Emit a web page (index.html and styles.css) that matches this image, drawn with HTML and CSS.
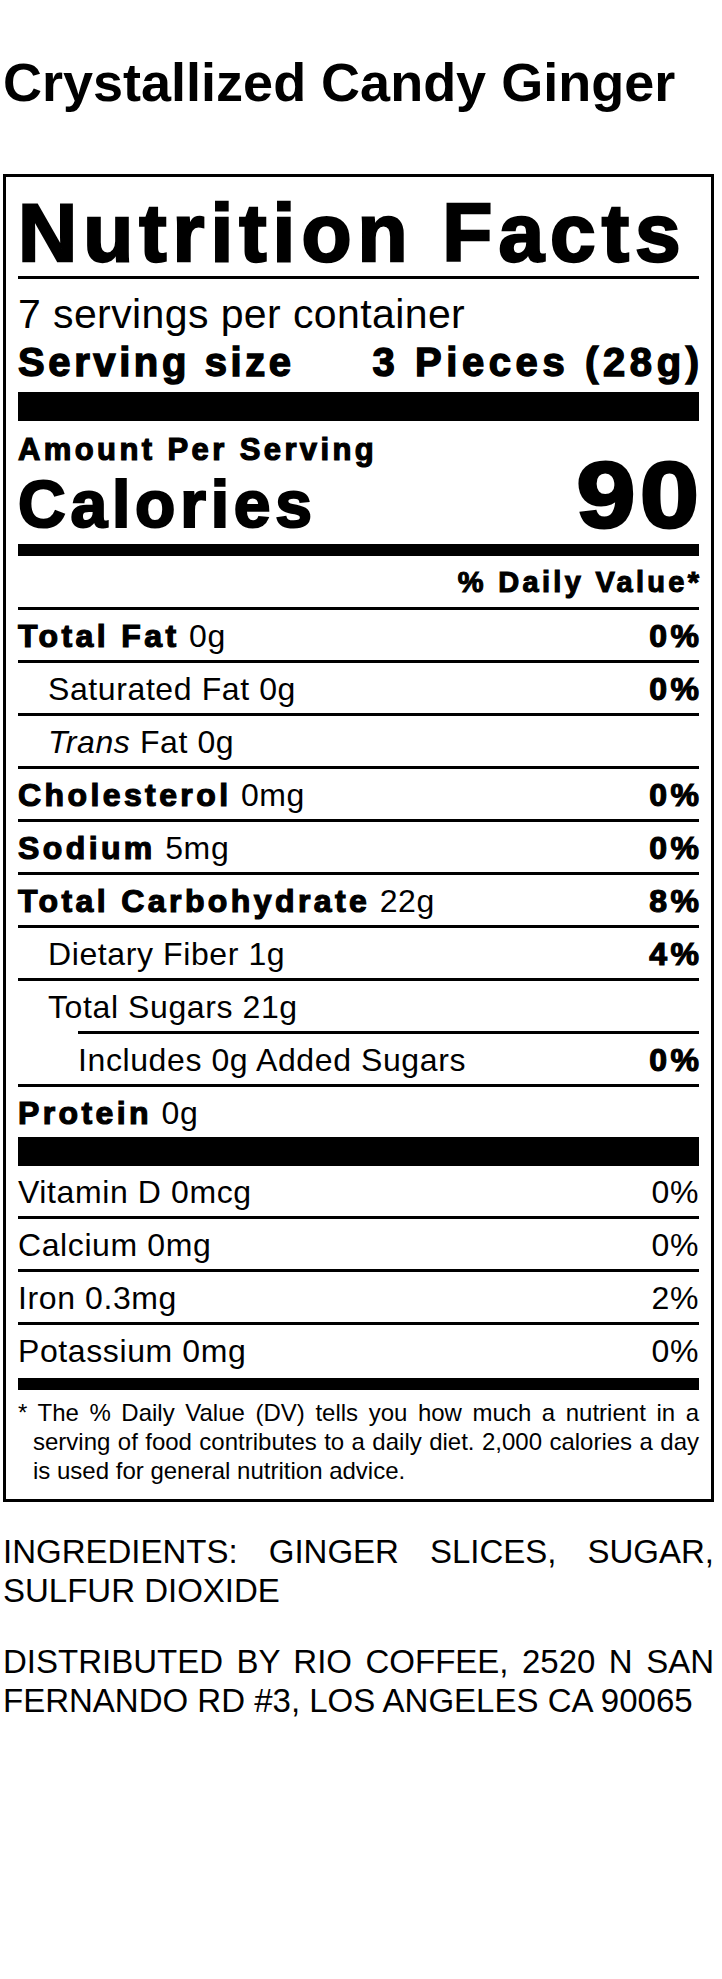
FILE: index.html
```html
<!DOCTYPE html>
<html lang="en">
<head>
<meta charset="utf-8">
<title>Crystallized Candy Ginger – Nutrition Facts</title>
<link rel="stylesheet" href="styles.css">
</head>
<body>
<div class="page">
  <h1 class="title">Crystallized Candy Ginger</h1>

  <section class="label">
    <h2 class="nf-title">Nutrition Facts</h2>
    <div class="servings">7 servings per container</div>
    <div class="serving-size">
      <span class="hv">Serving size</span>
      <span class="hv size-value">3 Pieces (28g)</span>
    </div>

    <div class="cal-block">
      <div class="cal-left">
        <div class="amount hv">Amount Per Serving</div>
        <div class="cal-label hv">Calories</div>
      </div>
      <div class="cal-value hv">90</div>
    </div>

    <div class="dv-head"><span class="hv">% Daily Value*</span></div>

    <div class="row"><span><b class="hv">Total Fat</b> 0g</span><b class="hv hv-end">0%</b></div>
    <div class="row ind1"><span>Saturated Fat 0g</span><b class="hv hv-end">0%</b></div>
    <div class="row ind1"><span><i>Trans</i> Fat 0g</span></div>
    <div class="row"><span><b class="hv">Cholesterol</b> 0mg</span><b class="hv hv-end">0%</b></div>
    <div class="row"><span><b class="hv">Sodium</b> 5mg</span><b class="hv hv-end">0%</b></div>
    <div class="row"><span><b class="hv">Total Carbohydrate</b> 22g</span><b class="hv hv-end">8%</b></div>
    <div class="row ind1"><span>Dietary Fiber 1g</span><b class="hv hv-end">4%</b></div>
    <div class="row ind1 no-rule"><span>Total Sugars 21g</span></div>
    <div class="added">
      <div class="added-inner"><span>Includes 0g Added Sugars</span><b class="hv hv-end">0%</b></div>
    </div>
    <div class="row protein"><span><b class="hv">Protein</b> 0g</span></div>

    <div class="row"><span>Vitamin D 0mcg</span><span>0%</span></div>
    <div class="row"><span>Calcium 0mg</span><span>0%</span></div>
    <div class="row"><span>Iron 0.3mg</span><span>2%</span></div>
    <div class="row potassium"><span>Potassium 0mg</span><span>0%</span></div>

    <p class="foot">* The % Daily Value (DV) tells you how much a nutrient in a serving of food contributes to a daily diet. 2,000 calories a day is used for general nutrition advice.</p>
  </section>

  <p class="ingredients">INGREDIENTS: GINGER SLICES, SUGAR, SULFUR DIOXIDE</p>
  <p class="dist">DISTRIBUTED BY RIO COFFEE, 2520 N SAN FERNANDO RD #3, LOS ANGELES CA 90065</p>
</div>
</body>
</html>
```

FILE: styles.css
```css
html, body {
  margin: 0;
  padding: 0;
  background: #fff;
  color: #000;
}

body {
  font-family: "Liberation Sans", Arial, Helvetica, sans-serif;
}

.page {
  width: 711px;
  padding-left: 3px;
}

.title {
  font-size: 54px;
  font-weight: 700;
  line-height: 62px;
  margin: 51px 0 61px;
}

/* heavy "Helvetica Black" imitation */
.hv {
  font-weight: 700;
  letter-spacing: 0.09em;
  -webkit-text-stroke: 0.035em #000;
}

.label {
  border: 3px solid #000;
  padding: 0 12px 14px;
}

.nf-title {
  margin: 0;
  padding: 15px 0 2px;
  font-size: 82px;
  line-height: 82px;
  font-weight: 700;
  letter-spacing: 6px;
  -webkit-text-stroke: 2.4px #000;
  border-bottom: 3px solid #000;
}

.servings {
  margin-top: 11px;
  font-size: 41px;
  line-height: 48px;
  letter-spacing: 0.4px;
}

.serving-size {
  display: flex;
  justify-content: space-between;
  font-size: 40px;
  line-height: 48px;
  padding-bottom: 6px;
  border-bottom: 29px solid #000;
}

.size-value {
  letter-spacing: 4.6px;
  margin-right: -4.6px;
}

.cal-block {
  display: flex;
  justify-content: space-between;
  align-items: flex-end;
  padding: 13px 0 7px;
  border-bottom: 12px solid #000;
}

.amount {
  font-size: 31px;
  line-height: 31px;
  letter-spacing: 3.4px;
  -webkit-text-stroke: 1.2px #000;
}

.cal-label {
  margin-top: 6px;
  font-size: 66px;
  line-height: 66px;
  letter-spacing: 4.8px;
  -webkit-text-stroke: 2.2px #000;
}

.cal-value {
  font-size: 92px;
  line-height: 84px;
  letter-spacing: 4px;
  margin-right: -4px;
  -webkit-text-stroke: 3px #000;
  transform: scaleX(1.15);
  transform-origin: right bottom;
}

.dv-head {
  text-align: right;
  font-size: 29px;
  line-height: 29px;
  padding: 12px 0 10px;
  border-bottom: 3px solid #000;
}

.dv-head .hv {
  letter-spacing: 3.3px;
  margin-right: -3.3px;
  -webkit-text-stroke: 1.1px #000;
}

.row {
  display: flex;
  justify-content: space-between;
  font-size: 32px;
  line-height: 47px;
  letter-spacing: 0.6px;
  padding-top: 3px;
  border-bottom: 3px solid #000;
  white-space: nowrap;
}

.row b.hv,
.added b.hv {
  letter-spacing: 3.4px;
  -webkit-text-stroke: 1.2px #000;
}

.row b.hv-end,
.added b.hv-end {
  margin-right: -3.4px;
}

.ind1 {
  padding-left: 30px;
}

.no-rule {
  border-bottom: none;
}

.added {
  font-size: 32px;
  letter-spacing: 0.6px;
  border-bottom: 3px solid #000;
}

.added-inner {
  display: flex;
  justify-content: space-between;
  margin-left: 60px;
  padding-top: 3px;
  line-height: 47px;
  border-top: 3px solid #000;
}

.row.protein {
  border-bottom-width: 29px;
}

.row.potassium {
  padding-bottom: 3px;
  border-bottom-width: 12px;
}

.foot {
  margin: 0;
  padding: 8px 0 0 15px;
  text-indent: -15px;
  font-size: 24px;
  line-height: 29px;
  text-align: justify;
}

.ingredients,
.dist {
  font-size: 33px;
  line-height: 39px;
  text-align: justify;
  margin: 30px 0 0;
}

.dist {
  margin-top: 32px;
}
```
